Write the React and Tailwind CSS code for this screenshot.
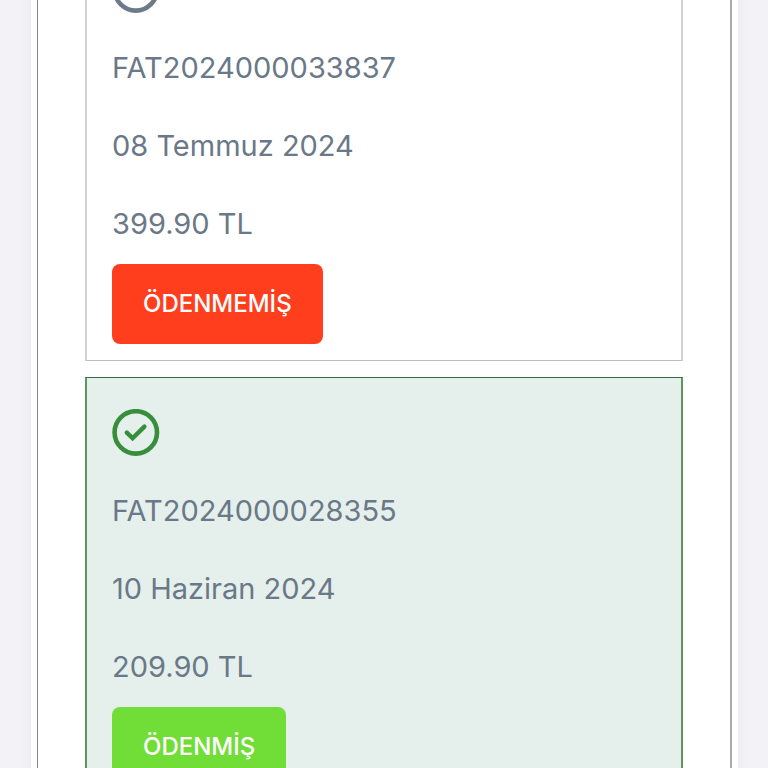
import React from 'react';

const invoices = [
  { id: 'FAT2024000033837', date: '08 Temmuz 2024', amount: '399.90 TL', paid: false },
  { id: 'FAT2024000028355', date: '10 Haziran 2024', amount: '209.90 TL', paid: true },
];

const StatusIcon = ({ paid }) => (
  <svg
    viewBox="0 0 48 48"
    fill="none"
    stroke="currentColor"
    aria-hidden="true"
    className={`size-12 ${paid ? 'text-[#388e3c]' : 'text-[#6c7a89]'}`}
  >
    <circle cx="23.8" cy="23.4" r="21.2" strokeWidth="4.6" />
    {paid && (
      <path d="M14.8 23.6 20.6 29.2 32.4 17.6" strokeWidth="4.4" strokeLinecap="round" />
    )}
  </svg>
);

const InvoiceCard = ({ invoice }) => (
  <li
    className={`border-x-2 border-y px-[25px] py-4 ${
      invoice.paid
        ? 'border-x-[#5c9562] border-y-[#2f7038] bg-[#e5f0ec]'
        : 'border-x-[#d3d3d5] border-y-[#bdbdbf] bg-white'
    }`}
  >
    <div className="flex h-[78px] items-center">
      <StatusIcon paid={invoice.paid} />
    </div>
    <p className="leading-[78px]">{invoice.id}</p>
    <p className="leading-[78px]">{invoice.date}</p>
    <p className="leading-[78px]">{invoice.amount}</p>
    <button
      type="button"
      className={`mt-px block h-20 rounded-lg px-[31px] text-2xl font-medium text-white ${
        invoice.paid ? 'bg-[#71dd37]' : 'bg-[#ff3e1d]'
      }`}
    >
      {invoice.paid ? 'ÖDENMİŞ' : 'ÖDENMEMİŞ'}
    </button>
  </li>
);

const App = () => {
  return (
    <div className="h-screen overflow-hidden bg-[#f3f2f7] pr-[30px] pl-[31px]">
      <main className="min-h-screen bg-white px-1.5 shadow-[0_0_12px_rgba(60,60,90,0.05)]">
        <section className="min-h-screen border-r-2 border-l border-r-[#ababab] border-l-[#858585] px-[47px]">
          {/* list is scrolled past the first icon */}
          <ul className="-mt-[66px] flex flex-col gap-4 font-[Inter,sans-serif] text-[29px] text-[#6a7887]">
            {invoices.map((invoice) => (
              <InvoiceCard key={invoice.id} invoice={invoice} />
            ))}
          </ul>
        </section>
      </main>
    </div>
  );
};

export default App;
